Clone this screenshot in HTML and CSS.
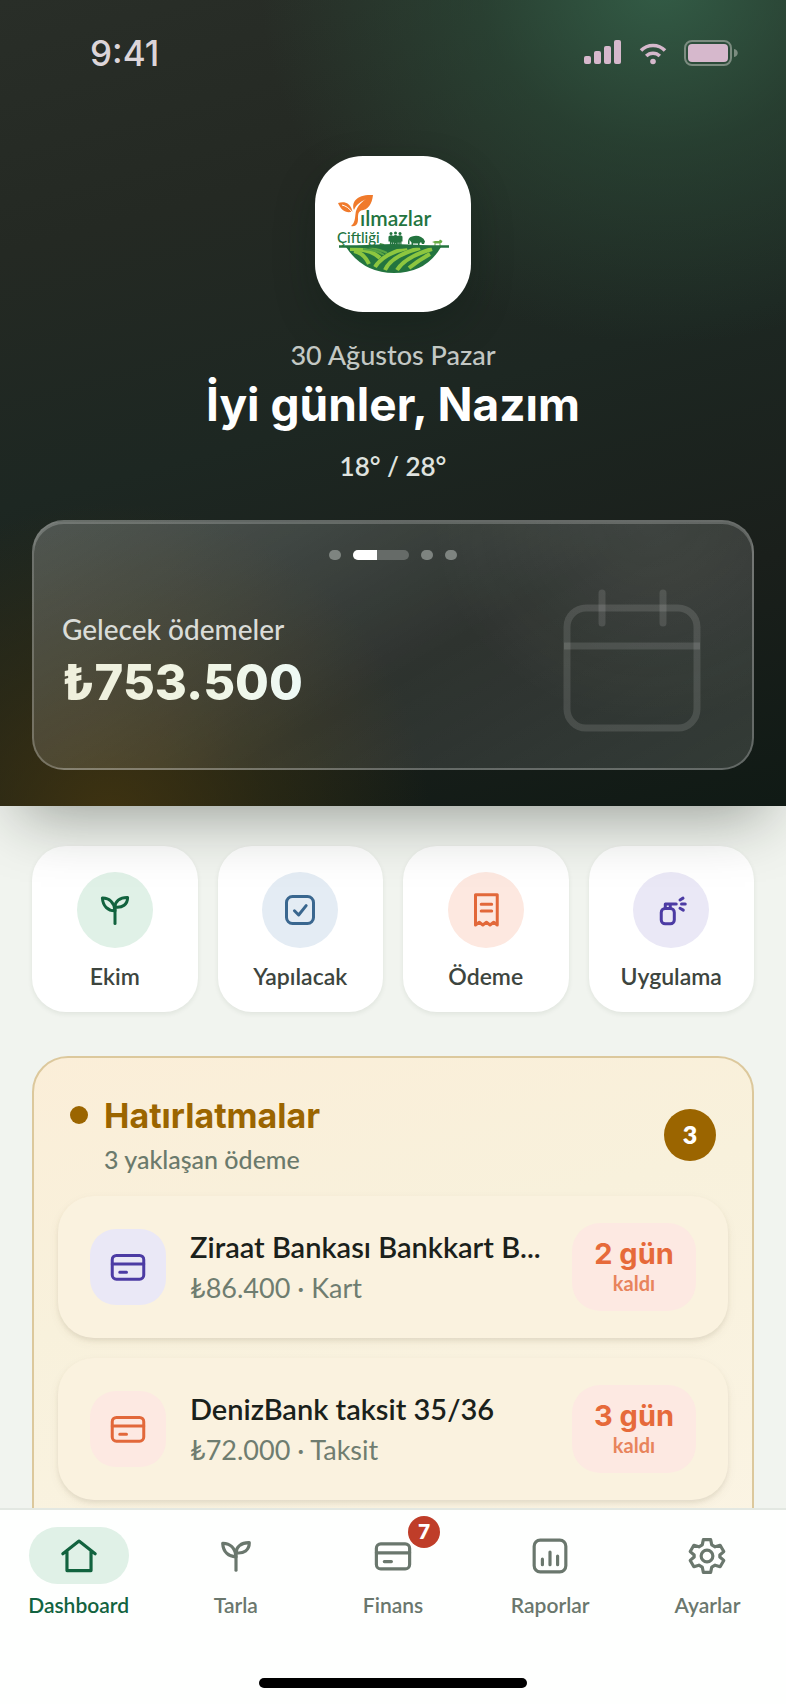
FILE: index.html
```html
<!DOCTYPE html>
<html lang="tr">
<head>
  <meta charset="UTF-8">
  <meta name="viewport" content="width=device-width, initial-scale=1">
  <title>Yılmazlar Çiftliği</title>
  <link rel="stylesheet" href="styles.css">
</head>
<body>
  <!-- shared icons -->
  <svg class="sprite" aria-hidden="true">
    <symbol id="icon-sprout" viewBox="0 0 24 24">
      <path d="M12 21V11"/>
      <path d="M12 12.500C7.500 12.600 3.900 9.600 3.600 4C8.200 3.900 11.500 7 12 12.500Z"/>
      <path d="M12 10C12 6.500 15 3.500 20.400 3.600C20.400 8.200 17 10.700 12 10Z"/>
    </symbol>
    <symbol id="icon-card" viewBox="0 0 24 24">
      <rect x="1.500" y="4.300" width="21" height="15.800" rx="2.800"/>
      <path d="M1.500 10h21M6.500 15.500h4.500"/>
    </symbol>
  </svg>

  <main class="content">
    <header class="hero">
      <div class="status-bar">
        <span class="time">9:41</span>
        <div class="status-icons">
          <svg width="38" height="26" viewBox="0 0 38 26" aria-hidden="true">
            <rect x="0" y="17" width="7" height="8" rx="2"/>
            <rect x="10" y="12" width="7" height="13" rx="2"/>
            <rect x="20" y="7" width="7" height="18" rx="2"/>
            <rect x="30" y="1" width="7" height="24" rx="2"/>
          </svg>
          <svg class="wifi" width="28" height="26" viewBox="0 0 28 26" aria-hidden="true">
            <path d="M2 11.500C8.500 4.800 19.500 4.800 26 11.500M7.200 17C11 13.200 17 13.200 20.800 17"/>
            <circle cx="14" cy="22.500" r="2.800"/>
          </svg>
          <svg width="56" height="28" viewBox="0 0 56 28" aria-hidden="true">
            <rect class="battery-frame" x="1" y="2" width="46" height="24" rx="7"/>
            <rect x="4" y="5" width="40" height="18" rx="4"/>
            <path class="battery-tip" d="M50 10c5 1 5 7 0 8z"/>
          </svg>
        </div>
      </div>

      <div class="logo">
        <svg viewBox="0 0 156 156" role="img" aria-label="Yılmazlar Çiftliği">
          <!-- seedling Y -->
          <g fill="#f07a2b">
            <path d="M23 47C29 45.500 35 46 37.500 55.500C31 58 26 54 23 47Z"/>
            <path d="M39 54C36 46 42 38 58 39C57 48 53 54 46 54.500C43 56 43 59 43 63C43 68 41 71 36 70C40 67 40 62 40.500 58C41 52 45 47 51 43C45 46 41 49 39 54Z"/>
          </g>
          <path d="M27 49C31 50 34 52 37 56" fill="none" stroke="#fff" stroke-width="1"/>
          <text class="logo-name" x="45" y="70">ılmazlar</text>
          <text class="logo-sub" x="22" y="87">Çiftliği</text>
          <!-- people and animals -->
          <g fill="#23743f">
            <circle cx="76" cy="77.500" r="1.500"/><circle cx="80.500" cy="77" r="1.500"/><circle cx="85" cy="77.500" r="1.500"/>
            <path d="M73.500 80.500q2.500-2 4.700-.500q2.300-2 4.600 0q2.500-1.500 4.700 .500v5h-1v6h-1.200v-5h-.500v5h-1.500v-5h-.500v6h-1.800v-5h-.800v5h-1.600v-6h-.500v5h-1.500v-5h-.500v5h-1.200v-6h-1.400z"/>
            <path d="M93 88q-.500-7 4-7.500q5-1.500 9 .500q3 1 4 4.500l-1 2.500h-2l-1-2l-1.500 1.500v3.500h-1.500v-3.500h-5v3.500h-1.500v-4.500l-2-2.500v4z"/>
          </g>
          <path d="M117 86l3-1h4l1-1.500l2.500 1.500l-1 2h-1v3h-1v-2.500h-4v2.500h-1v-3z" fill="#67ac45"/>
          <path d="M64 90l1-3l2 .500l2 .500l1.500 3h-6z" fill="#4f9a47"/>
          <!-- fields -->
          <path d="M31 91Q78 85 126 91Q111 117 79 117Q48 117 31 91Z" fill="#23743f"/>
          <g fill="none" stroke="#8dc63f" stroke-width="4">
            <path d="M39 95Q49 97 54 108"/>
            <path d="M35 93Q56 93 65 102"/>
            <path d="M60 111Q68 98 92 92"/>
            <path d="M70 114Q76 100 105 92"/>
            <path d="M82 114Q90 101 117 93"/>
            <path d="M94 112Q104 104 115 98"/>
          </g>
          <path d="M54 91Q66 94 72 97M48 93Q62 94 69 99" fill="none" stroke="#5aa544" stroke-width="2"/>
          <path d="M24 90.500H58Q78 93 96 90.500H134" fill="none" stroke="#23743f" stroke-width="2.500"/>
        </svg>
      </div>

      <p class="date">30 Ağustos Pazar</p>
      <h1 class="greeting">İyi günler, Nazım</h1>
      <p class="weather">18° / 28°</p>

      <section class="summary">
        <div class="dots">
          <span class="dot"></span>
          <span class="dot dot-active"><span class="dot-fill"></span></span>
          <span class="dot"></span>
          <span class="dot"></span>
        </div>
        <div class="summary-body">
          <div class="summary-text">
            <p class="summary-label">Gelecek ödemeler</p>
            <p class="summary-amount">₺753.500</p>
          </div>
          <svg class="calendar" viewBox="0 0 144 144" aria-hidden="true">
            <rect x="7" y="20" width="130" height="120" rx="19"/>
            <path d="M4 58H140"/>
            <path class="pin" d="M42 5V35"/>
            <path class="pin" d="M103 5V35"/>
          </svg>
        </div>
      </section>
    </header>

    <div class="actions">
      <button class="action">
        <span class="action-icon green"><svg class="icon"><use href="#icon-sprout"/></svg></span>
        Ekim
      </button>
      <button class="action">
        <span class="action-icon blue">
          <svg class="icon" viewBox="0 0 24 24"><rect x="3" y="3" width="18" height="18" rx="4"/><path d="M8.300 12.500l2.800 2.800l5-6.200"/></svg>
        </span>
        Yapılacak
      </button>
      <button class="action">
        <span class="action-icon orange">
          <svg class="icon" viewBox="0 0 24 24"><path d="M5 1.800h14.500v20.200l-2.400-1.800l-2.400 1.800l-2.400-1.800l-2.400 1.800l-2.400-1.800l-2.500 1.800zM8.800 8.200h7M8.800 12.600h7"/></svg>
        </span>
        Ödeme
      </button>
      <button class="action">
        <span class="action-icon purple">
          <svg class="icon" viewBox="0 0 24 24"><rect x="5.500" y="11" width="8.700" height="10.200" rx="2.600"/><path d="M8.200 11V8h7.300M11.500 8v3M18 5.300l2-1.200M19 8h2.500M18 10.800l2.200 1.300"/></svg>
        </span>
        Uygulama
      </button>
    </div>

    <section class="reminders">
      <div class="reminders-head">
        <span class="bullet"></span>
        <div class="reminders-title">
          <h2>Hatırlatmalar</h2>
          <p>3 yaklaşan ödeme</p>
        </div>
        <span class="count">3</span>
      </div>

      <article class="reminder">
        <span class="reminder-icon purple"><svg class="icon"><use href="#icon-card"/></svg></span>
        <div class="reminder-text">
          <h3>Ziraat Bankası Bankkart B...</h3>
          <p>₺86.400 · Kart</p>
        </div>
        <div class="due"><strong>2 gün</strong><span>kaldı</span></div>
      </article>

      <article class="reminder">
        <span class="reminder-icon pink"><svg class="icon"><use href="#icon-card"/></svg></span>
        <div class="reminder-text">
          <h3>DenizBank taksit 35/36</h3>
          <p>₺72.000 · Taksit</p>
        </div>
        <div class="due"><strong>3 gün</strong><span>kaldı</span></div>
      </article>
    </section>
  </main>

  <nav class="tab-bar">
    <div class="tabs">
      <a class="tab active" href="#dashboard">
        <span class="tab-icon"><svg class="icon" viewBox="0 0 24 24"><path d="M1.800 10.600L12 2.600l10.200 8M4.400 9v12.200h15.200V9"/></svg></span>
        Dashboard
      </a>
      <a class="tab" href="#tarla">
        <span class="tab-icon"><svg class="icon"><use href="#icon-sprout"/></svg></span>
        Tarla
      </a>
      <a class="tab" href="#finans">
        <span class="tab-icon"><svg class="icon"><use href="#icon-card"/></svg><span class="badge">7</span></span>
        Finans
      </a>
      <a class="tab" href="#raporlar">
        <span class="tab-icon"><svg class="icon" viewBox="0 0 24 24"><rect x="2" y="2" width="20" height="20" rx="3.800"/><path d="M7.200 14v3.500M12 9.500v8M16.800 12v5.500"/></svg></span>
        Raporlar
      </a>
      <a class="tab" href="#ayarlar">
        <span class="tab-icon"><svg class="icon" viewBox="0 0 24 24"><circle cx="12" cy="12" r="3.700"/><path d="M9.700 1.700h4.600l.700 3.300l2.100 1.200l3.200-1l2.300 4l-2.500 2.200v1.200l2.500 2.200l-2.300 4l-3.200-1l-2.100 1.200l-.700 3.300h-4.600l-.700-3.300l-2.100-1.200l-3.200 1l-2.300-4l2.500-2.200v-1.200l-2.500-2.200l2.300-4l3.200 1l2.100-1.200z"/></svg></span>
        Ayarlar
      </a>
    </div>
    <div class="home-indicator"></div>
  </nav>
</body>
</html>
```
FILE: styles.css
```css
* {
  box-sizing: border-box;
}

body {
  display: flex;
  flex-direction: column;
  height: 100vh;
  margin: 0;
  overflow: hidden;
  background-color: #f1f4ef;
  color: #1a211b;
  font-family: Lato, sans-serif;
}

h1, h2, h3, p {
  margin: 0;
}

.sprite {
  display: none;
}

.icon {
  width: 36px;
  height: 36px;
  fill: none;
  stroke: currentColor;
  stroke-width: 2;
  stroke-linecap: round;
  stroke-linejoin: round;
}

.content {
  flex: 1;
  min-height: 0;
  overflow-y: auto;
  scrollbar-width: none;
}

/* hero */
.hero {
  position: relative;
  display: flex;
  flex-direction: column;
  align-items: center;
  padding: 0 32px 36px;
  color: #fff;
  background:
    radial-gradient(400px 360px at 84% -2%, rgba(54, 104, 78, 0.8), rgba(44, 84, 62, 0.5) 45%, transparent),
    radial-gradient(320px 320px at 14% 102%, rgba(76, 58, 14, 0.75), rgba(66, 54, 14, 0.4) 50%, transparent),
    linear-gradient(165deg, #292e28 0%, #242923 25%, #1d2722 50%, #1a1f1b 75%, #101a15 100%);
  box-shadow: 0 28px 60px -20px rgba(20, 28, 20, 0.42);
}

.status-bar {
  display: flex;
  justify-content: space-between;
  align-items: center;
  align-self: stretch;
  height: 106px;
  padding: 0 14px 0 58px;
}

.time {
  color: #dcd5d9;
  font-family: Inter, sans-serif;
  font-size: 35px;
  font-weight: 500;
}

.status-icons {
  display: flex;
  gap: 17px;
  fill: #d6b8cc;
}

.wifi path {
  fill: none;
  stroke: #d6b8cc;
  stroke-width: 3.500;
}

.battery-frame {
  fill: none;
  stroke: #7c8c80;
  stroke-width: 2;
}

.battery-tip {
  fill: #7c8c80;
}

.logo {
  width: 156px;
  height: 156px;
  margin-top: 50px;
  border-radius: 48px;
  background-color: #fff;
  box-shadow: 0 16px 40px rgba(10, 30, 20, 0.3);
}

.logo-name,
.logo-sub {
  fill: #23743f;
}

.logo-name {
  font-size: 21px;
  font-weight: 600;
}

.logo-sub {
  font-size: 15px;
  font-weight: 500;
}

.date {
  margin-top: 26px;
  color: #c3c8c4;
  font-size: 27px;
  font-weight: 500;
  line-height: 34px;
}

.greeting {
  font-family: Inter, sans-serif;
  font-size: 46px;
  font-weight: 700;
  line-height: 64px;
}

.weather {
  margin-top: 14px;
  color: #dfe2df;
  font-size: 26px;
  font-weight: 600;
  line-height: 32px;
}

.summary {
  align-self: stretch;
  height: 250px;
  margin-top: 38px;
  padding: 28px 28px 36px;
  border: 2px solid rgba(255, 255, 255, 0.24);
  border-radius: 32px;
  background:
    radial-gradient(220px 200px at 86% 0%, rgba(255, 255, 255, 0.08), transparent),
    linear-gradient(150deg, rgba(255, 255, 255, 0.22), rgba(255, 255, 255, 0.09) 55%, rgba(255, 255, 255, 0.14));
  box-shadow: inset 0 2px 0 rgba(255, 255, 255, 0.2);
}

.dots {
  display: flex;
  justify-content: center;
  gap: 12px;
}

.dot {
  width: 12px;
  height: 10px;
  border-radius: 6px;
  background-color: #7e8480;
}

.dot-active {
  width: 56px;
  overflow: hidden;
  background-color: #666b68;
}

.dot-fill {
  display: block;
  width: 24px;
  height: 10px;
  background-color: #fff;
}

.summary-body {
  display: flex;
  justify-content: space-between;
  align-items: center;
  margin-top: 28px;
  padding-right: 20px;
}

.summary-text {
  padding-top: 10px;
}

.summary-label {
  color: #dadcd8;
  font-size: 28px;
  font-weight: 500;
  line-height: 36px;
}

.summary-amount {
  background: linear-gradient(90deg, #efefdc, #f0f5e4 60%, #eefaf6);
  background-clip: text;
  color: transparent;
  font-family: Inter, sans-serif;
  font-size: 49px;
  font-weight: 800;
  line-height: 72px;
}

.calendar {
  width: 144px;
  height: 144px;
  fill: none;
  stroke: rgba(255, 255, 255, 0.12);
  stroke-width: 7;
  stroke-linecap: butt;
}

.pin {
  stroke-linecap: round;
}

/* quick actions */
.actions {
  display: grid;
  grid-template-columns: repeat(4, 1fr);
  gap: 20px;
  padding: 40px 32px 44px;
}

.action {
  display: flex;
  flex-direction: column;
  align-items: center;
  gap: 13px;
  padding: 26px 0 21px;
  border: none;
  border-radius: 34px;
  background-color: #fff;
  box-shadow: 0 2px 5px rgba(30, 50, 30, 0.08);
  color: #3d453e;
  font-family: inherit;
  font-size: 23px;
  font-weight: 600;
  line-height: 30px;
}

.action-icon,
.reminder-icon {
  display: flex;
  flex-shrink: 0;
  align-items: center;
  justify-content: center;
  width: 76px;
  height: 76px;
  border-radius: 50%;
}

.green {
  background-color: #e0f1e7;
  color: #12633f;
}

.blue {
  background-color: #e4ecf4;
  color: #3a678f;
}

.orange {
  background-color: #fde8e0;
  color: #e2683a;
}

.purple {
  background-color: #eae8f6;
  color: #4c3ba4;
}

.pink {
  background-color: #fde9e2;
  color: #e2683a;
}

/* reminders */
.reminders {
  display: flex;
  flex-direction: column;
  gap: 20px;
  margin: 0 32px 32px;
  padding: 36px 24px 64px;
  border: 2px solid #dcc89c;
  border-radius: 36px;
  background: linear-gradient(165deg, #fbeed8, #f8f1dc 40%, #fbf4e4);
}

.reminders-head {
  display: flex;
  align-items: center;
  padding: 0 12px;
}

.bullet {
  align-self: flex-start;
  width: 18px;
  height: 18px;
  margin: 12px 16px 0 0;
  border-radius: 50%;
  background-color: #9b6500;
}

.reminders-title {
  flex: 1;
}

.reminders-title h2 {
  color: #9b6500;
  font-family: Inter, sans-serif;
  font-size: 34px;
  font-weight: 700;
  line-height: 44px;
}

.reminders-title p {
  margin-top: 4px;
  color: #6b7a6c;
  font-size: 25px;
  font-weight: 500;
  line-height: 34px;
}

.count {
  width: 52px;
  height: 52px;
  border-radius: 50%;
  background-color: #9b6500;
  color: #fff;
  font-size: 25px;
  font-weight: 800;
  line-height: 50px;
  text-align: center;
}

.reminder {
  display: flex;
  align-items: center;
  gap: 24px;
  height: 142px;
  padding: 0 32px;
  border-radius: 36px;
  background-color: #faf2df;
  box-shadow: 0 3px 4px rgba(90, 80, 50, 0.1), 0 4px 12px rgba(90, 80, 50, 0.05);
}

.reminder-icon {
  border-radius: 26px;
}

.reminder-text {
  flex: 1;
  min-width: 0;
}

.reminder-text h3 {
  font-size: 29px;
  font-weight: 600;
  line-height: 42px;
  white-space: nowrap;
}

.reminder-text p {
  color: #6f7d70;
  font-size: 27px;
  line-height: 40px;
}

.due {
  display: flex;
  flex-direction: column;
  align-items: center;
  width: 124px;
  padding: 14px 0 16px;
  border-radius: 28px;
  background-color: #fde9e2;
  color: #e66a3a;
}

.due strong {
  font-family: Inter, sans-serif;
  font-size: 29px;
  font-weight: 700;
  line-height: 34px;
}

.due span {
  color: #e8845c;
  font-size: 20px;
  font-weight: 700;
  line-height: 24px;
}

/* bottom tabs */
.tab-bar {
  position: relative;
  border-top: 2px solid #e3e8e2;
  background-color: #fefffe;
}

.tabs {
  display: flex;
  padding-top: 17px;
}

.tab {
  display: flex;
  flex: 1;
  flex-direction: column;
  align-items: center;
  gap: 7px;
  color: #6a776d;
  font-size: 21px;
  font-weight: 600;
  line-height: 28px;
  text-decoration: none;
}

.tab-icon {
  position: relative;
  display: flex;
  align-items: center;
  justify-content: center;
  width: 100px;
  height: 57px;
  border-radius: 29px;
}

.tab-icon .icon {
  width: 38px;
  height: 38px;
}

.active {
  color: #12633f;
}

.active .tab-icon {
  background-color: #e0f1e7;
}

.badge {
  position: absolute;
  top: -11px;
  right: 3px;
  width: 32px;
  height: 32px;
  border-radius: 50%;
  background-color: #bf3d29;
  color: #fff;
  font-size: 21px;
  font-weight: 800;
  line-height: 30px;
  text-align: center;
}

.home-indicator {
  width: 34%;
  height: 10px;
  margin: 59px auto 16px;
  border-radius: 5px;
  background-color: #000;
}
```
